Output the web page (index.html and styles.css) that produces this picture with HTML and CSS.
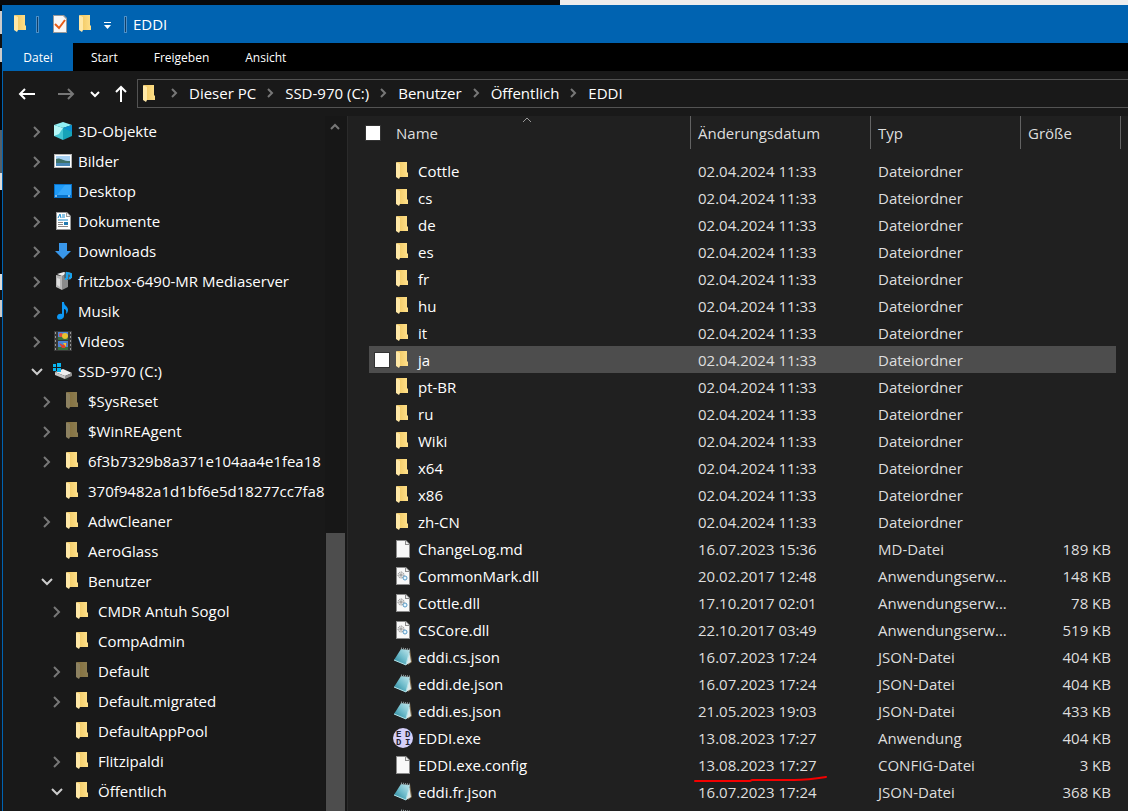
FILE: index.html
```
<!DOCTYPE html>
<html lang="de">
	<head>
		<meta charset="utf-8">
		<title>EDDI</title>
		<link rel="stylesheet" href="styles.css">
	</head>
	<body>
		<svg class="sprite" aria-hidden="true">
			<defs>
				<linearGradient id="gold" x1="0" x2="1"><stop offset="0" stop-color="#f0c761"/><stop offset="1" stop-color="#ffe08a"/></linearGradient>
				<linearGradient id="note" x1="0" y1="1" x2="1" y2="0"><stop offset="0" stop-color="#1f7f95"/><stop offset=".5" stop-color="#6fbccb"/><stop offset="1" stop-color="#c5e9ee"/></linearGradient>
			</defs>
			<symbol id="folder" viewBox="0 0 20 20">
				<path d="M4 1h10v10l1 1v4H5z" fill="url(#gold)"/>
				<path d="M3 1l4 2v13l-1 2-3-2z" fill="#ffe8a6"/>
			</symbol>
			<symbol id="cube" viewBox="0 0 20 20">
				<path d="M1 4l9-3 9 3-9 3z" fill="#8ff0f5"/>
				<path d="M1 4l9 3v12l-9-4z" fill="#43c5d3"/>
				<path d="M19 4l-9 3v12l9-4z" fill="#16a3b8"/>
				<path d="M1 4l9 3-4 6-5 2z" fill="#b5f7f7"/>
				<path d="M10 7l9-3v7z" fill="#0a90d0"/>
			</symbol>
			<symbol id="picture" viewBox="0 0 20 20">
				<path d="M1 3h18v14H1z" fill="#b5b5b5"/>
				<path d="M2 4h16v12H2z" fill="#fff"/>
				<path d="M3 5h14v10H3z" fill="#a9d2f5"/>
				<path d="M3 8c4-2 6 2 14 2v3H3z" fill="#3f7269"/>
				<path d="M3 12h14v3H3z" fill="#4786b5"/>
			</symbol>
			<symbol id="desktop" viewBox="0 0 20 20">
				<path d="M1 3h18v14H1z" fill="#0872c9"/>
				<path d="M2 4h16v10H2z" fill="#1f9bf8"/>
				<path d="M12 4h6v10H4z" fill="#36a7fa"/>
				<path d="M2 15h2M15 15h2" stroke="#fff"/>
			</symbol>
			<symbol id="document" viewBox="0 0 20 20">
				<path d="M3 1h11l4 4v14H3z" fill="#999"/>
				<path d="M4 2h9v4h4v12H4z" fill="#fff"/>
				<path d="M14 2v3h3z" fill="#eee"/>
				<path d="M5 7l2-4 1 4M9 4h3M9 6h3M5 9h10" stroke="#1588c9" fill="none"/>
				<path d="M5 11.500h5M5 13.500h5M5 15.500h10" stroke="#888"/>
				<path d="M11 11h4v3h-4z" fill="#237ab0"/>
			</symbol>
			<symbol id="download" viewBox="0 0 20 20">
				<path d="M6 2h8v8h4l-8 8-8-8h4z" fill="#3997ea"/>
			</symbol>
			<symbol id="server" viewBox="0 0 20 20">
				<path d="M4 3l7-2 4 2-6 2z" fill="#eee"/>
				<path d="M3 4l6 1v14l-6-3z" fill="#b7b7b7"/>
				<path d="M9 5l6-2v13l-6 3z" fill="#8a8a8a"/>
				<path d="M4 7l3 1v8l-3-2z" fill="#ddd"/>
				<circle cx="15" cy="5" r="4" fill="#4d6672"/>
				<path d="M14 8V2l4 1v4M12 8h2M16 7h2" stroke="#18a3ef" stroke-width="2" fill="none"/>
			</symbol>
			<symbol id="music" viewBox="0 0 20 20">
				<path d="M9 1h2c0 4 4 4 4 8 0 2-1 3-2 4 1-4-1-5-2-5v7c0 4-7 5-7 1 0-3 3-4 5-3z" fill="#0d98f5"/>
			</symbol>
			<symbol id="video" viewBox="0 0 20 20">
				<path d="M1 0h18v20H1z" fill="#383838"/>
				<path d="M2.500 1v18M17.500 1v18" stroke="#999" stroke-width="1" stroke-dasharray="2 2"/>
				<path d="M5 1h10v8H5zM5 10h10v9H5z" fill="#4a84d8"/>
				<path d="M5 6h10v3H5zM5 16h10v3H5z" fill="#39713e"/>
				<circle cx="8" cy="4" r="2" fill="#e64d38"/>
				<circle cx="12" cy="5" r="3" fill="#e9c12f"/>
				<path d="M6 12l4 2 4-2-2 5H9z" fill="#df402e"/>
				<path d="M10 12h3v4z" fill="#efc735"/>
			</symbol>
			<symbol id="drive" viewBox="0 0 20 20">
				<path d="M2 11l8-3 9 4-7 3z" fill="#eee"/>
				<path d="M2 11l10 4v3L2 14z" fill="#c8c8c8"/>
				<path d="M12 15l7-3v3l-7 3z" fill="#8f8f8f"/>
				<path d="M0 3h3v3H0zM4 2h4v4H4zM0 7h3v3H0zM4 7h4v4H4z" fill="#08b5f0"/>
			</symbol>
			<symbol id="file" viewBox="0 0 20 20">
				<path d="M3 1h10l4 4v14H3z" fill="#8b8b8b"/>
				<path d="M4 2h8v4h4v12H4z" fill="#f8f8f8"/>
				<path d="M13 2v3h3z" fill="#eee"/>
			</symbol>
			<symbol id="dll" viewBox="0 0 20 20">
				<use href="#file"/>
				<circle cx="8" cy="9" r="3" fill="#ddd" stroke="#777" stroke-dasharray="1 1"/>
				<circle cx="8" cy="9" r="1" fill="#fff" stroke="#888"/>
				<circle cx="12" cy="12" r="2" fill="#eaf6fd" stroke="#579ac7"/>
			</symbol>
			<symbol id="json" viewBox="0 0 20 20">
				<path d="M17 2l2 13-4 3z" fill="#7d6a4c"/>
				<path d="M16 3l2 12-5 3z" fill="#dce8e8"/>
				<path d="M8 2l9 1-4 15-12-5z" fill="url(#note)"/>
				<path d="M8 1.500l9 1" stroke="#8e989a" stroke-width="2" stroke-dasharray="1 1"/>
				<path d="M1 13l12 5 3-12" stroke="#b5e6ed" fill="none"/>
			</symbol>
			<symbol id="check" viewBox="0 0 20 20">
				<path d="M3 1h11l3 3v15H3z" fill="#999"/>
				<path d="M4 2h9l3 3v13H4z" fill="#f8f8f8"/>
				<path d="M5 10l4 4 6-8" stroke="#e85c18" stroke-width="2" fill="none"/>
			</symbol>
			<symbol id="right" viewBox="0 0 20 20"><path d="M7 6l5 5-5 5" fill="none" stroke="currentColor" stroke-width="2"/></symbol>
			<symbol id="crumb" viewBox="0 0 20 20"><path d="M8 5l4 4-4 4" fill="none" stroke="currentColor" stroke-width="2"/></symbol>
			<symbol id="down" viewBox="0 0 20 20"><path d="M5 8l5 5 5-5" fill="none" stroke="currentColor" stroke-width="2"/></symbol>
			<symbol id="small-down" viewBox="0 0 20 20"><path d="M6 8l4 4 4-4" fill="none" stroke="currentColor" stroke-width="2"/></symbol>
			<symbol id="up" viewBox="0 0 20 20"><path d="M6 13l4-4 4 4" fill="none" stroke="currentColor" stroke-width="2"/></symbol>
			<symbol id="arrow" viewBox="0 0 20 20"><path d="M3 10h15M8 5l-5 5 5 5" fill="none" stroke="currentColor" stroke-width="2"/></symbol>
		</svg>

		<div class="window">
			<header class="titlebar">
				<svg class="icon"><use href="#folder"/></svg>
				<span class="divider"></span>
				<button class="quick" aria-label="Eigenschaften"><svg class="icon"><use href="#check"/></svg></button>
				<button class="quick" aria-label="Neuer Ordner"><svg class="icon"><use href="#folder"/></svg></button>
				<button class="quick" aria-label="Symbolleiste anpassen"><svg class="icon" viewBox="0 0 20 20"><path d="M7 8.500h7" stroke="#fff"/><path d="M7 11h7l-3.500 4z" fill="#fff"/></svg></button>
				<span class="divider last"></span>
				<h1>EDDI</h1>
			</header>
			<nav class="ribbon">
				<button class="tab active">Datei</button>
				<button class="tab">Start</button>
				<button class="tab">Freigeben</button>
				<button class="tab">Ansicht</button>
			</nav>
			<div class="addressbar">
				<button class="nav back" aria-label="Zurück"><svg class="icon"><use href="#arrow"/></svg></button>
				<button class="nav forward" aria-label="Vorwärts"><svg class="icon"><use href="#arrow"/></svg></button>
				<button class="nav" aria-label="Zuletzt besucht"><svg class="icon"><use href="#small-down"/></svg></button>
				<button class="nav parent" aria-label="Nach oben"><svg class="icon"><use href="#arrow"/></svg></button>
				<nav class="crumbs">
					<svg class="icon"><use href="#folder"/></svg>
					<svg class="sep"><use href="#crumb"/></svg><a href="#">Dieser PC</a>
					<svg class="sep"><use href="#crumb"/></svg><a href="#">SSD-970 (C:)</a>
					<svg class="sep"><use href="#crumb"/></svg><a href="#">Benutzer</a>
					<svg class="sep"><use href="#crumb"/></svg><a href="#">Öffentlich</a>
					<svg class="sep"><use href="#crumb"/></svg><a href="#">EDDI</a>
				</nav>
			</div>

			<div class="main">
				<aside class="sidebar">
					<ul class="tree">
						<li><svg class="arrow"><use href="#right"/></svg><svg class="icon"><use href="#cube"/></svg><a href="#">3D-Objekte</a></li>
						<li><svg class="arrow"><use href="#right"/></svg><svg class="icon"><use href="#picture"/></svg><a href="#">Bilder</a></li>
						<li><svg class="arrow"><use href="#right"/></svg><svg class="icon"><use href="#desktop"/></svg><a href="#">Desktop</a></li>
						<li><svg class="arrow"><use href="#right"/></svg><svg class="icon"><use href="#document"/></svg><a href="#">Dokumente</a></li>
						<li><svg class="arrow"><use href="#right"/></svg><svg class="icon"><use href="#download"/></svg><a href="#">Downloads</a></li>
						<li><svg class="arrow"><use href="#right"/></svg><svg class="icon"><use href="#server"/></svg><a href="#">fritzbox-6490-MR Mediaserver</a></li>
						<li><svg class="arrow"><use href="#right"/></svg><svg class="icon"><use href="#music"/></svg><a href="#">Musik</a></li>
						<li><svg class="arrow"><use href="#right"/></svg><svg class="icon"><use href="#video"/></svg><a href="#">Videos</a></li>
						<li><svg class="arrow open"><use href="#down"/></svg><svg class="icon"><use href="#drive"/></svg><a href="#">SSD-970 (C:)</a></li>
						<li class="level1"><svg class="arrow"><use href="#right"/></svg><svg class="icon dim"><use href="#folder"/></svg><a href="#">$SysReset</a></li>
						<li class="level1"><svg class="arrow"><use href="#right"/></svg><svg class="icon dim"><use href="#folder"/></svg><a href="#">$WinREAgent</a></li>
						<li class="level1"><svg class="arrow"><use href="#right"/></svg><svg class="icon"><use href="#folder"/></svg><a href="#">6f3b7329b8a371e104aa4e1fea18</a></li>
						<li class="level1"><svg class="arrow"></svg><svg class="icon"><use href="#folder"/></svg><a href="#">370f9482a1d1bf6e5d18277cc7fa8</a></li>
						<li class="level1"><svg class="arrow"><use href="#right"/></svg><svg class="icon"><use href="#folder"/></svg><a href="#">AdwCleaner</a></li>
						<li class="level1"><svg class="arrow"></svg><svg class="icon"><use href="#folder"/></svg><a href="#">AeroGlass</a></li>
						<li class="level1"><svg class="arrow open"><use href="#down"/></svg><svg class="icon"><use href="#folder"/></svg><a href="#">Benutzer</a></li>
						<li class="level2"><svg class="arrow"><use href="#right"/></svg><svg class="icon"><use href="#folder"/></svg><a href="#">CMDR Antuh Sogol</a></li>
						<li class="level2"><svg class="arrow"></svg><svg class="icon"><use href="#folder"/></svg><a href="#">CompAdmin</a></li>
						<li class="level2"><svg class="arrow"><use href="#right"/></svg><svg class="icon dim"><use href="#folder"/></svg><a href="#">Default</a></li>
						<li class="level2"><svg class="arrow"><use href="#right"/></svg><svg class="icon"><use href="#folder"/></svg><a href="#">Default.migrated</a></li>
						<li class="level2"><svg class="arrow"></svg><svg class="icon"><use href="#folder"/></svg><a href="#">DefaultAppPool</a></li>
						<li class="level2"><svg class="arrow"><use href="#right"/></svg><svg class="icon"><use href="#folder"/></svg><a href="#">Flitzipaldi</a></li>
						<li class="level2"><svg class="arrow open"><use href="#down"/></svg><svg class="icon"><use href="#folder"/></svg><a href="#">Öffentlich</a></li>
					</ul>
					<div class="scrollbar">
						<svg class="icon"><use href="#up"/></svg>
						<div class="thumb"></div>
					</div>
				</aside>

				<section class="files">
					<table>
						<thead>
							<tr>
								<th class="name">
									<div class="head">
										<input type="checkbox" aria-label="Alle auswählen">
										<button>Name</button>
										<svg class="sort" viewBox="0 0 10 6"><path d="M1 5l4-4 4 4" fill="none" stroke="#999"/></svg>
									</div>
								</th>
								<th class="date"><div class="head"><button>Änderungsdatum</button></div></th>
								<th class="type"><div class="head"><button>Typ</button></div></th>
								<th class="size"><div class="head"><button>Größe</button></div></th>
							</tr>
						</thead>
						<tbody>
							<tr><td><label><input type="checkbox"><svg class="icon"><use href="#folder"/></svg>Cottle</label></td><td>02.04.2024 11:33</td><td>Dateiordner</td><td></td></tr>
							<tr><td><label><input type="checkbox"><svg class="icon"><use href="#folder"/></svg>cs</label></td><td>02.04.2024 11:33</td><td>Dateiordner</td><td></td></tr>
							<tr><td><label><input type="checkbox"><svg class="icon"><use href="#folder"/></svg>de</label></td><td>02.04.2024 11:33</td><td>Dateiordner</td><td></td></tr>
							<tr><td><label><input type="checkbox"><svg class="icon"><use href="#folder"/></svg>es</label></td><td>02.04.2024 11:33</td><td>Dateiordner</td><td></td></tr>
							<tr><td><label><input type="checkbox"><svg class="icon"><use href="#folder"/></svg>fr</label></td><td>02.04.2024 11:33</td><td>Dateiordner</td><td></td></tr>
							<tr><td><label><input type="checkbox"><svg class="icon"><use href="#folder"/></svg>hu</label></td><td>02.04.2024 11:33</td><td>Dateiordner</td><td></td></tr>
							<tr><td><label><input type="checkbox"><svg class="icon"><use href="#folder"/></svg>it</label></td><td>02.04.2024 11:33</td><td>Dateiordner</td><td></td></tr>
							<tr class="hover"><td><label><input type="checkbox"><svg class="icon"><use href="#folder"/></svg>ja</label></td><td>02.04.2024 11:33</td><td>Dateiordner</td><td></td></tr>
							<tr><td><label><input type="checkbox"><svg class="icon"><use href="#folder"/></svg>pt-BR</label></td><td>02.04.2024 11:33</td><td>Dateiordner</td><td></td></tr>
							<tr><td><label><input type="checkbox"><svg class="icon"><use href="#folder"/></svg>ru</label></td><td>02.04.2024 11:33</td><td>Dateiordner</td><td></td></tr>
							<tr><td><label><input type="checkbox"><svg class="icon"><use href="#folder"/></svg>Wiki</label></td><td>02.04.2024 11:33</td><td>Dateiordner</td><td></td></tr>
							<tr><td><label><input type="checkbox"><svg class="icon"><use href="#folder"/></svg>x64</label></td><td>02.04.2024 11:33</td><td>Dateiordner</td><td></td></tr>
							<tr><td><label><input type="checkbox"><svg class="icon"><use href="#folder"/></svg>x86</label></td><td>02.04.2024 11:33</td><td>Dateiordner</td><td></td></tr>
							<tr><td><label><input type="checkbox"><svg class="icon"><use href="#folder"/></svg>zh-CN</label></td><td>02.04.2024 11:33</td><td>Dateiordner</td><td></td></tr>
							<tr><td><label><input type="checkbox"><svg class="icon"><use href="#file"/></svg>ChangeLog.md</label></td><td>16.07.2023 15:36</td><td>MD-Datei</td><td>189 KB</td></tr>
							<tr><td><label><input type="checkbox"><svg class="icon"><use href="#dll"/></svg>CommonMark.dll</label></td><td>20.02.2017 12:48</td><td>Anwendungserw...</td><td>148 KB</td></tr>
							<tr><td><label><input type="checkbox"><svg class="icon"><use href="#dll"/></svg>Cottle.dll</label></td><td>17.10.2017 02:01</td><td>Anwendungserw...</td><td>78 KB</td></tr>
							<tr><td><label><input type="checkbox"><svg class="icon"><use href="#dll"/></svg>CSCore.dll</label></td><td>22.10.2017 03:49</td><td>Anwendungserw...</td><td>519 KB</td></tr>
							<tr><td><label><input type="checkbox"><svg class="icon"><use href="#json"/></svg>eddi.cs.json</label></td><td>16.07.2023 17:24</td><td>JSON-Datei</td><td>404 KB</td></tr>
							<tr><td><label><input type="checkbox"><svg class="icon"><use href="#json"/></svg>eddi.de.json</label></td><td>16.07.2023 17:24</td><td>JSON-Datei</td><td>404 KB</td></tr>
							<tr><td><label><input type="checkbox"><svg class="icon"><use href="#json"/></svg>eddi.es.json</label></td><td>21.05.2023 19:03</td><td>JSON-Datei</td><td>433 KB</td></tr>
							<tr>
								<td>
									<label>
										<input type="checkbox">
										<svg class="icon logo" viewBox="0 0 20 20">
											<circle cx="10" cy="10" r="10" fill="#d5d0fa"/>
											<text x="3" y="9">E</text><text x="12" y="9">D</text>
											<text x="3" y="17">D</text><text x="12" y="17">I</text>
										</svg>EDDI.exe
									</label>
								</td>
								<td>13.08.2023 17:27</td><td>Anwendung</td><td>404 KB</td>
							</tr>
							<tr><td><label><input type="checkbox"><svg class="icon"><use href="#file"/></svg>EDDI.exe.config</label></td><td>13.08.2023 17:27<svg class="underline" viewBox="0 0 140 10"><path d="M3 5h55l2-1h42c14 0 20-1 32-3" fill="none" stroke="#f40000" stroke-width="2" stroke-linecap="round"/></svg></td><td>CONFIG-Datei</td><td>3 KB</td></tr>
							<tr><td><label><input type="checkbox"><svg class="icon"><use href="#json"/></svg>eddi.fr.json</label></td><td>16.07.2023 17:24</td><td>JSON-Datei</td><td>368 KB</td></tr>
							<tr><td><label><input type="checkbox"><svg class="icon"><use href="#json"/></svg></label></td><td></td><td></td><td></td></tr>
						</tbody>
					</table>
				</section>
			</div>
		</div>
	</body>
</html>
```
FILE: styles.css
```
* {
	box-sizing: border-box;
}
body {
	margin: 0;
	height: 100vh;
	padding: 5px 0 0 2px;
	overflow: hidden;
	font: 15px/20px "Open Sans", "Noto Sans", sans-serif;
	color: #fff;
	/* desktop behind the window */
	background:
		linear-gradient(90deg, #07090b 560px, #ededed 560px) 0 0 / 100% 5px no-repeat,
		linear-gradient(#000 11px, #ccc 11px 34px, #111 34px 48px, #ccc 48px 62px, #05070b 62px 130px, #53606a 130px 173px, #ddd 173px 190px, #05070b 190px 274px, #ddd 274px 290px, #111 290px 300px, #ccc 300px 317px, #10141a 317px) 0 0 / 2px 100% no-repeat,
		#07090b;
}
a {
	color: inherit;
	text-decoration: none;
}
button {
	padding: 0;
	border: 0;
	background: none;
	font: inherit;
	color: inherit;
}
.sprite {
	position: absolute;
	width: 0;
	height: 0;
}
.icon,
.arrow,
.sep {
	display: block;
	flex: none;
	width: 20px;
	height: 20px;
}
.dim {
	opacity: 0.5;
}
.window {
	display: flex;
	flex-direction: column;
	height: 100%;
	border-left: 1px solid #0063b1;
	background: #191919;
}

/* title bar */
.titlebar {
	display: flex;
	align-items: center;
	flex: none;
	height: 38px;
	padding-left: 8px;
	background: #0063b1;
}
.titlebar h1 {
	margin: 0;
	font-size: 15px;
	font-weight: 400;
}
.divider {
	width: 3px;
	height: 17px;
	margin: 0 11px 0 5px;
	border: 1px solid #4b8fc8;
	background: #123f66;
}
.divider.last {
	margin: 0 6px;
}
.quick {
	margin-right: 6px;
}
.quick + .quick,
.quick + .quick + .quick {
	margin: 0 1px 0 0;
}

/* ribbon */
.ribbon {
	display: flex;
	flex: none;
	height: 28px;
	background: #000;
	font-size: 12px;
}
.tab {
	padding: 1px 18px 0;
}
.tab.active {
	width: 70px;
	background: #0063b1;
}

/* address bar */
.addressbar {
	display: flex;
	align-items: center;
	flex: none;
	height: 45px;
	padding-left: 14px;
}
.nav {
	margin-right: 19px;
}
.nav.forward {
	margin-right: 9px;
	color: #777;
}
.nav.forward .icon {
	transform: rotate(180deg);
}
.nav.forward + .nav {
	margin-right: 6px;
}
.nav.parent {
	margin-right: 6px;
}
.nav.parent .icon {
	transform: rotate(90deg);
}
.crumbs {
	display: flex;
	align-items: center;
	flex: 1;
	height: 29px;
	padding-left: 2px;
	border: 1px solid #535353;
	border-right: 0;
}
.crumbs a {
	padding-bottom: 2px;
}
.sep {
	margin: 0 5px 0 4px;
	color: #777;
}

/* main area */
.main {
	display: flex;
	flex: 1;
	min-height: 0;
}
.sidebar {
	display: flex;
	flex: none;
	width: 345px;
	border-right: 1px solid #2b2b2b;
}
.tree {
	flex: 1;
	min-width: 0;
	margin: 0;
	padding: 0;
	overflow: hidden;
	list-style: none;
}
.tree li {
	display: flex;
	align-items: center;
	height: 30px;
	padding-left: 24px;
	white-space: nowrap;
}
.tree .level1 {
	padding-left: 34px;
}
.tree .level2 {
	padding-left: 44px;
}
.arrow {
	margin-right: 6px;
	color: #777;
}
.arrow.open {
	color: #ccc;
}
.tree .icon {
	margin-right: 5px;
}
.scrollbar {
	display: flex;
	flex-direction: column;
	justify-content: space-between;
	flex: none;
	width: 22px;
	padding-right: 2px;
	background: #171717;
	color: #777;
}
.thumb {
	width: 19px;
	height: 40%;
	margin-left: 1px;
	background: #4d4d4d;
}

/* file list */
.files {
	flex: 1;
	min-width: 0;
	padding: 0 7px 0 15px;
	overflow: hidden;
	background: #202020;
}
table {
	width: 100%;
	table-layout: fixed;
	border-spacing: 0;
}
th {
	height: 41px;
	padding: 0;
	font-weight: 400;
	text-align: left;
	vertical-align: top;
	color: #dedede;
}
.date {
	width: 180px;
}
.type {
	width: 150px;
}
.size {
	width: 100px;
}
.head {
	display: flex;
	align-items: center;
	position: relative;
	height: 33px;
	padding-left: 7px;
	border-right: 1px solid #636363;
}
.name .head {
	padding-left: 2px;
}
.name button {
	margin-left: 15px;
}
.sort {
	position: absolute;
	top: 1px;
	left: 50%;
	width: 10px;
	height: 6px;
	margin-left: -5px;
}
input[type="checkbox"] {
	appearance: none;
	width: 16px;
	height: 16px;
	margin: 0;
	border: 1px solid #333;
	background: #fff;
}
td {
	position: relative;
	height: 27px;
	padding: 0 7px;
	background-clip: padding-box;
	white-space: nowrap;
	color: #dedede;
}
td:first-child {
	padding-left: 5px;
	border-left: 6px solid transparent;
	color: #fff;
}
td:last-child {
	padding-right: 5px;
	border-right: 5px solid transparent;
	text-align: right;
}
td label {
	display: flex;
	align-items: center;
}
td input[type="checkbox"] {
	margin-right: 3px;
	opacity: 0;
}
td .icon {
	margin-right: 5px;
}
.hover td {
	background-color: #4d4d4d;
}
.hover input[type="checkbox"] {
	opacity: 1;
}
.logo text {
	font: bold 9px "Liberation Mono", monospace;
	fill: #22202c;
}
.underline {
	position: absolute;
	top: 25px;
	left: 1px;
	width: 140px;
	height: 10px;
	z-index: 1;
}
```
